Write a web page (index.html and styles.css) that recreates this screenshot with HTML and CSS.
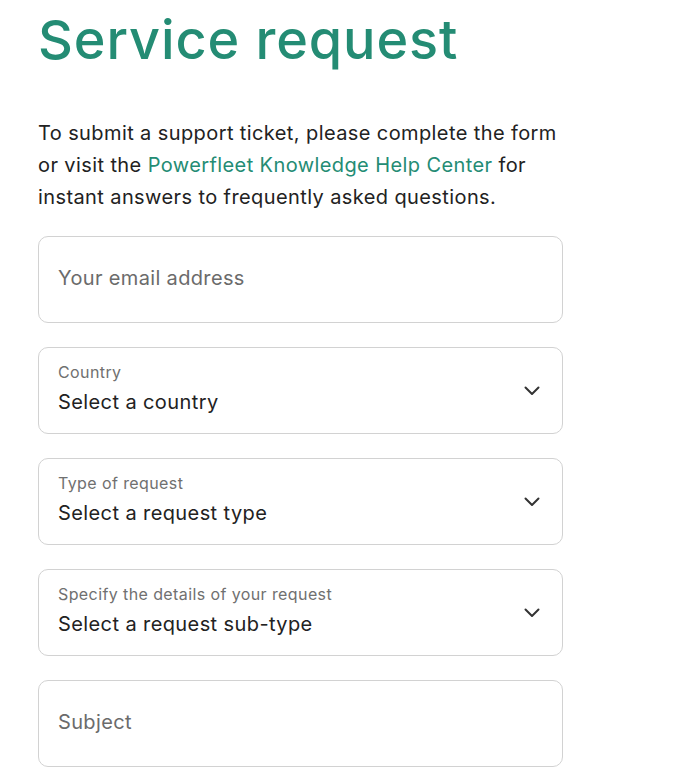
FILE: index.html
```html
<!DOCTYPE html>
<html lang="en">
<head>
<meta charset="utf-8">
<title>Service request</title>
<link rel="stylesheet" href="styles.css">
</head>
<body>
<main class="page">
  <h1 class="title">Service request</h1>
  <p class="intro">To submit a support ticket, please complete the form or visit the <a class="link" href="#">Powerfleet Knowledge Help Center</a> for instant answers to frequently asked questions.</p>
  <form class="form">
    <div class="field">
      <span class="placeholder">Your email address</span>
    </div>
    <div class="field select">
      <div class="select-text">
        <span class="label">Country</span>
        <span class="value">Select a country</span>
      </div>
      <svg class="chevron" viewBox="0 0 16 10" width="16" height="10"><path d="M1.5 1.5 L8 8 L14.5 1.5" fill="none" stroke="#333" stroke-width="2" stroke-linecap="round" stroke-linejoin="round"/></svg>
    </div>
    <div class="field select">
      <div class="select-text">
        <span class="label">Type of request</span>
        <span class="value">Select a request type</span>
      </div>
      <svg class="chevron" viewBox="0 0 16 10" width="16" height="10"><path d="M1.5 1.5 L8 8 L14.5 1.5" fill="none" stroke="#333" stroke-width="2" stroke-linecap="round" stroke-linejoin="round"/></svg>
    </div>
    <div class="field select">
      <div class="select-text">
        <span class="label">Specify the details of your request</span>
        <span class="value">Select a request sub-type</span>
      </div>
      <svg class="chevron" viewBox="0 0 16 10" width="16" height="10"><path d="M1.5 1.5 L8 8 L14.5 1.5" fill="none" stroke="#333" stroke-width="2" stroke-linecap="round" stroke-linejoin="round"/></svg>
    </div>
    <div class="field">
      <span class="placeholder">Subject</span>
    </div>
  </form>
</main>
</body>
</html>
```
FILE: styles.css
```css
html, body {
  margin: 0;
  padding: 0;
  background: #ffffff;
}
body {
  font-family: Inter, "Noto Sans", sans-serif;
  color: #222222;
}
.page {
  padding: 0 0 0 38px;
  width: 525px;
}
.title {
  margin: 0;
  padding-top: 5px;
  font-family: Inter, "Noto Sans", sans-serif;
  font-weight: 500;
  font-size: 54px;
  line-height: 70px;
  letter-spacing: 0.9px;
  color: #248c74;
}
.intro {
  margin: 42px 0 0 0;
  font-size: 20px;
  line-height: 32px;
  letter-spacing: 0.4px;
  color: #222222;
}
.link {
  color: #248c74;
  text-decoration: none;
}
.form {
  margin-top: 23px;
  display: flex;
  flex-direction: column;
  gap: 24px;
}
.field {
  box-sizing: border-box;
  height: 87px;
  border: 1px solid #d2d2d2;
  border-radius: 10px;
  padding: 0 19px 4px 19px;
  display: flex;
  align-items: center;
}
.placeholder {
  font-size: 20px;
  letter-spacing: 0.35px;
  color: #6b6b6b;
}
.select {
  justify-content: space-between;
  padding-right: 22px;
  padding-bottom: 0;
}
.select-text {
  display: flex;
  flex-direction: column;
  gap: 4px;
  padding-bottom: 6px;
}
.label {
  font-size: 16px;
  line-height: 24px;
  letter-spacing: 0.4px;
  color: #707070;
}
.value {
  font-size: 20px;
  line-height: 28px;
  letter-spacing: 0.4px;
  color: #222222;
}
.chevron {
  display: block;
  margin-top: 0;
}
```
